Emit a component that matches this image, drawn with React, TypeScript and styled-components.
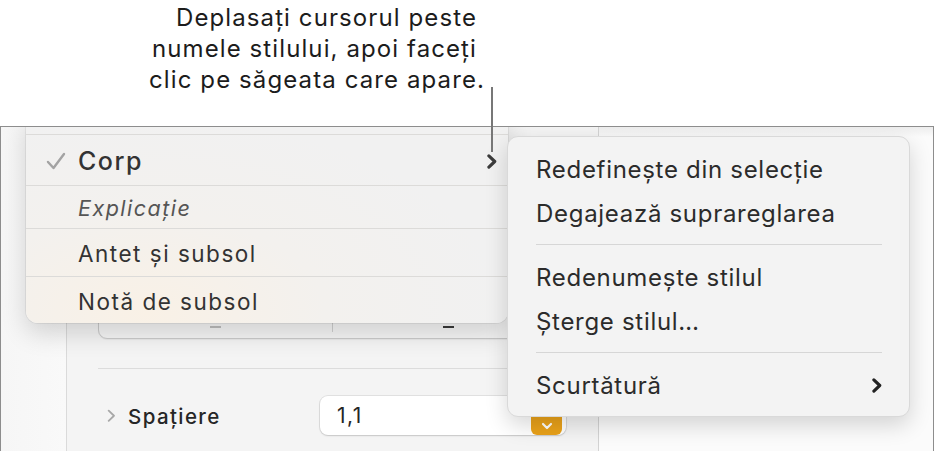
import React from 'react';
import styled, { createGlobalStyle } from 'styled-components';

const GlobalStyle = createGlobalStyle`
    html, body {
        margin: 0;
        padding: 0;
        background: #ffffff;
    }
    body {
        font-family: Inter, 'Noto Sans', 'Liberation Sans', sans-serif;
        -webkit-font-smoothing: antialiased;
    }
`;

interface IMenuRow {
    readonly label: string;
    readonly height: number;
    readonly size: number;
    readonly spacing: number;
    readonly weight?: number;
    readonly italic?: boolean;
    readonly checked?: boolean;
    readonly arrow?: boolean;
}

const styleRows: IMenuRow[] = [
    { label: 'Corp', height: 51, size: 25, spacing: 1.5, weight: 500, checked: true, arrow: true },
    { label: 'Explicație', height: 43, size: 21.5, spacing: 1.5, italic: true },
    { label: 'Antet și subsol', height: 48, size: 22.5, spacing: 1.5 },
    { label: 'Notă de subsol', height: 46, size: 22.5, spacing: 1.5 },
];

const Chevron = ({ size = 12, color = '#333', width = 2.4 }: { size?: number; color?: string; width?: number }) => (
    <svg width={size} height={size * 1.5} viewBox="0 0 8 12" fill="none">
        <path d="M1.5 1.5 L6.2 6 L1.5 10.5" stroke={color} strokeWidth={width} strokeLinecap="round" strokeLinejoin="round" />
    </svg>
);

export default function App() {
    return (
        <Page>
            <GlobalStyle />
            <Callout>
                <CalloutLine>Deplasați cursorul peste</CalloutLine>
                <CalloutLine>numele stilului, apoi faceți</CalloutLine>
                <CalloutLine $hang={8}>clic pe săgeata care apare.</CalloutLine>
            </Callout>
            <Window>
                <Gutter />
                <Inspector>
                    <Segmented>
                        <Segment>
                            <Dash $dark={false} />
                        </Segment>
                        <SegmentDivider />
                        <Segment>
                            <Dash $dark />
                        </Segment>
                    </Segmented>
                    <Rule />
                    <SpacingRow>
                        <Disclosure>
                            <Chevron size={9} color="#a8a8a8" width={1.6} />
                        </Disclosure>
                        <RowLabel>Spațiere</RowLabel>
                        <ValueField>
                            <span>1,1</span>
                            <Stepper>
                                <svg width="12" height="8" viewBox="0 0 12 8" fill="none">
                                    <path d="M2 2 L6 6 L10 2" stroke="#fff" strokeWidth="2.2" strokeLinecap="round" strokeLinejoin="round" />
                                </svg>
                            </Stepper>
                        </ValueField>
                    </SpacingRow>
                </Inspector>
                <Canvas />

                <StyleMenu>
                    <MenuRow $height={21} />
                    {styleRows.map((row) => (
                        <MenuRow key={row.label} $height={row.height}>
                            <Check>
                                {row.checked && (
                                    <svg width="20" height="18" viewBox="0 0 20 18" fill="none">
                                        <path d="M2 10 L7.5 16 L18 2" stroke="#a3a3a3" strokeWidth="2.4" strokeLinecap="round" strokeLinejoin="round" />
                                    </svg>
                                )}
                            </Check>
                            <MenuLabel
                                $size={row.size}
                                $spacing={row.spacing}
                                $weight={row.weight ?? 400}
                                $italic={!!row.italic}
                            >
                                {row.label}
                            </MenuLabel>
                            {row.arrow && (
                                <RowArrow>
                                    <Chevron size={10} color="#3c3c3c" width={2.5} />
                                </RowArrow>
                            )}
                        </MenuRow>
                    ))}
                </StyleMenu>

                <SubMenu>
                    <SubItem>Redefinește din selecție</SubItem>
                    <SubItem>Degajează suprareglarea</SubItem>
                    <SubSeparator />
                    <SubItem>Redenumește stilul</SubItem>
                    <SubItem>Șterge stilul…</SubItem>
                    <SubSeparator />
                    <SubItem>
                        Scurtătură
                        <Chevron size={10} color="#222" width={2.5} />
                    </SubItem>
                </SubMenu>
            </Window>
            <Leader />
        </Page>
    );
}

const Page = styled.div`
    position: relative;
    width: 935px;
    height: 451px;
    overflow: hidden;
    background: #ffffff;
`;

const Callout = styled.div`
    height: 126px;
    box-sizing: border-box;
    padding: 2px 0 0;
    width: 477px;
    text-align: right;
    color: #1c1c1c;
    font-size: 24px;
    line-height: 31px;
    letter-spacing: 1.1px;
`;

const CalloutLine = styled.div<{ $hang?: number }>`
    margin-right: ${({ $hang }) => -($hang ?? 0)}px;
    white-space: nowrap;
`;

const Leader = styled.div`
    position: absolute;
    left: 491px;
    top: 87px;
    width: 2px;
    height: 65px;
    background: #777777;
`;

const Window = styled.div`
    position: relative;
    display: flex;
    width: 934px;
    height: 325px;
    box-sizing: border-box;
    border: 1px solid #8d8d8d;
    border-bottom: none;
    overflow: hidden;
    background: #f7f7f7;
`;

const Gutter = styled.div`
    width: 65px;
    flex: none;
    background: linear-gradient(90deg, #f6f6f6, #f9f9f9);
`;

const Inspector = styled.div`
    width: 533px;
    flex: none;
    box-sizing: border-box;
    padding: 0 32px 0 31px;
    background: #f4f4f4;
    border-left: 1px solid #dadada;
    border-right: 1px solid #d3d3d3;
`;

const Segmented = styled.div`
    display: flex;
    margin-top: 172px;
    height: 40px;
    box-sizing: border-box;
    border: 1px solid #cbcbcb;
    border-radius: 9px;
    background: #f6f6f6;
    box-shadow: 0 1px 1px rgba(0, 0, 0, 0.05);
`;

const Segment = styled.div`
    flex: 1;
    display: flex;
    justify-content: center;
    align-items: flex-end;
    padding-bottom: 10px;
`;

const SegmentDivider = styled.div`
    width: 1px;
    height: 10px;
    margin-top: 22px;
    background: #d0d0d0;
`;

const Dash = styled.div<{ $dark: boolean }>`
    width: 11px;
    height: 2px;
    background: ${({ $dark }) => ($dark ? '#3a3a3a' : '#bdbdbd')};
`;

const Rule = styled.div`
    height: 1px;
    margin: 29px -32px 0 0;
    background: #dcdcdc;
`;

const SpacingRow = styled.div`
    display: flex;
    align-items: center;
    margin-top: 27px;
    height: 39px;
`;

const Disclosure = styled.div`
    width: 30px;
    flex: none;
    padding-left: 9px;
    box-sizing: border-box;
    display: flex;
    align-items: center;
`;

const RowLabel = styled.div`
    width: 192px;
    flex: none;
    padding-top: 2px;
    font-size: 20.5px;
    font-weight: 500;
    letter-spacing: 1.4px;
    color: #262626;
`;

const ValueField = styled.div`
    position: relative;
    flex: 1;
    height: 39px;
    box-sizing: border-box;
    display: flex;
    align-items: center;
    padding: 0 4px 0 17px;
    background: #ffffff;
    border-radius: 8px;
    box-shadow: 0 0 0 1px rgba(0, 0, 0, 0.08), 0 1px 2px rgba(0, 0, 0, 0.12);
    font-size: 21px;
    letter-spacing: 1.5px;
    color: #262626;

    span {
        flex: 1;
    }
`;

const Stepper = styled.div`
    flex: none;
    width: 31px;
    height: 28px;
    margin-top: 10px;
    border-radius: 6px;
    background: #eaa21a;
    display: flex;
    align-items: flex-end;
    justify-content: center;
    padding-bottom: 5px;
    box-sizing: border-box;
`;

const Canvas = styled.div`
    flex: 1;
    background: linear-gradient(180deg, #ededed 0, #fbfbfb 10px, #fbfbfb);
`;

const StyleMenu = styled.div`
    position: absolute;
    left: 25px;
    top: -13px;
    width: 482px;
    border-radius: 0 0 12px 12px;
    background: radial-gradient(ellipse at 25% 95%, #f9f1e6 0, #f3f1ee 35%, #f1f1f1 70%);
    box-shadow: 0 10px 26px rgba(0, 0, 0, 0.16), 0 0 0 1px rgba(0, 0, 0, 0.06);
    overflow: hidden;
`;

const MenuRow = styled.div<{ $height: number }>`
    display: flex;
    align-items: center;
    height: ${({ $height }) => $height}px;
    padding-top: 2px;
    box-sizing: border-box;
    border-bottom: 1px solid #dcdbd9;

    &:first-child {
        padding-top: 0;
    }

    &:last-child {
        border-bottom: none;
    }
`;

const Check = styled.div`
    width: 52px;
    flex: none;
    padding-left: 20px;
    box-sizing: border-box;
    display: flex;
    align-items: center;
`;

const MenuLabel = styled.div<{ $size: number; $spacing: number; $weight: number; $italic: boolean }>`
    flex: 1;
    font-size: ${({ $size }) => $size}px;
    font-weight: ${({ $weight }) => $weight};
    font-style: ${({ $italic }) => ($italic ? 'italic' : 'normal')};
    letter-spacing: ${({ $spacing }) => $spacing}px;
    color: ${({ $italic }) => ($italic ? '#555555' : '#333333')};
`;

const RowArrow = styled.div`
    flex: none;
    padding-right: 11px;
    display: flex;
    align-items: center;
`;

const SubMenu = styled.div`
    position: absolute;
    left: 506px;
    top: 9px;
    width: 403px;
    box-sizing: border-box;
    padding: 10px 27px 9px 28px;
    background: #f3f3f3;
    border: 1px solid #d9d9d9;
    border-radius: 11px;
    box-shadow: 0 8px 22px rgba(0, 0, 0, 0.16);
`;

const SubItem = styled.div`
    display: flex;
    align-items: center;
    justify-content: space-between;
    height: 44px;
    font-size: 24px;
    letter-spacing: 0.7px;
    color: #2b2b2b;
`;

const SubSeparator = styled.div`
    height: 1px;
    margin: 9px 0 10px;
    background: #d6d6d6;
`;
